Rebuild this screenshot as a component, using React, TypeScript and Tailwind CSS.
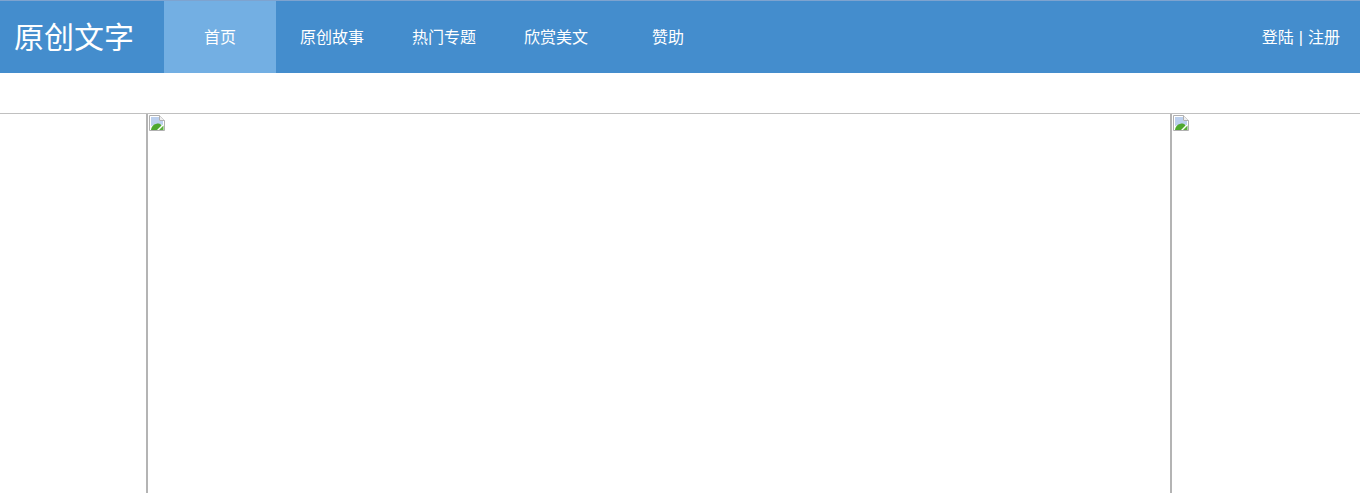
const navItems = ['首页', '原创故事', '热门专题', '欣赏美文', '赞助'];

function BrokenImage() {
  return (
    <svg width="16" height="16" viewBox="0 0 16 16" className="block">
      <path d="M0.5 0.5H10.5L15.5 5.500V15.500H0.500Z" fill="#fff" stroke="#b0b0b0" />
      <path d="M10.5 0.5V5.500H15.500" fill="#efefef" stroke="#b0b0b0" />
      <path d="M2 2H10V6H14V10L8 9L2 11Z" fill="#bcd0ee" />
      <path d="M2 15C2.500 10.500 6 8.500 9.500 8.500C11 8.500 12 9.500 12.500 10.500L8 15Z" fill="#4ea82f" />
      <path d="M10 15L14.500 10.500V15Z" fill="#5bb03c" />
    </svg>
  );
}

export default function App() {
  return (
    <div className="h-[493px] overflow-hidden bg-white font-['Liberation_Sans','Noto_Sans_CJK_SC',sans-serif]">
      <header className="flex h-[73px] items-stretch border-t border-[#7ea3cf] bg-[#448dcd] text-white">
        <div className="flex w-[164px] items-center pt-px pl-[14px] text-[30px] leading-none">原创文字</div>
        {navItems.map((item, i) => (
          <a
            key={item}
            className={
              i === 0
                ? 'flex w-[112px] items-center justify-center bg-[#73afe3] pt-0.5 text-base'
                : 'flex w-[112px] items-center justify-center pt-0.5 text-base'
            }
          >
            {item}
          </a>
        ))}
        <div className="ml-auto flex items-center gap-[5px] pt-0.5 pr-5 text-base">
          <span>登陆</span>
          <span>|</span>
          <span>注册</span>
        </div>
      </header>
      <div className="mt-10 flex h-[380px] border-t border-[#c0c0c0]">
        <div className="w-[146px]" />
        <div className="w-[1024px] border-l-2 border-[#b4b4b4] pt-px pl-px">
          <BrokenImage />
        </div>
        <div className="flex-1 border-l-2 border-[#b4b4b4] pt-px pl-px">
          <BrokenImage />
        </div>
      </div>
    </div>
  );
}
